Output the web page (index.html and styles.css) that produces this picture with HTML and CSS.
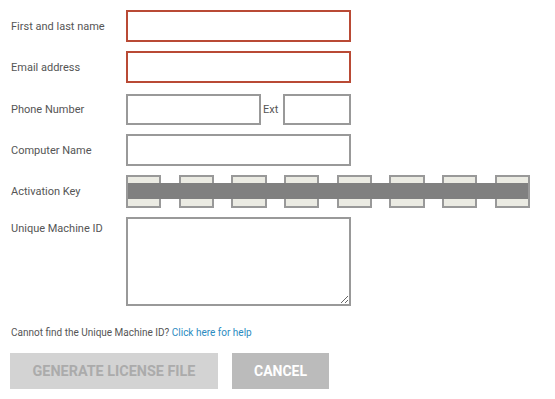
FILE: index.html
```html
<!DOCTYPE html>
<html lang="en">
<head>
    <meta charset="UTF-8">
    <meta name="viewport" content="width=device-width, initial-scale=1.0">
    <title>License Request</title>
    <link rel="stylesheet" href="styles.css">
</head>
<body>
    <form class="license-form">
        <div class="row">
            <label class="label" for="fullName">First and last name</label>
            <input class="field field-error" type="text" id="fullName">
        </div>
        <div class="row">
            <label class="label" for="email">Email address</label>
            <input class="field field-error" type="text" id="email">
        </div>
        <div class="row row-phone">
            <label class="label" for="phone">Phone Number</label>
            <input class="field phone" type="text" id="phone">
            <span class="ext-label">Ext</span>
            <input class="field ext" type="text" id="ext">
        </div>
        <div class="row">
            <label class="label" for="computer">Computer Name</label>
            <input class="field" type="text" id="computer">
        </div>
        <div class="row">
            <label class="label">Activation Key</label>
            <div class="key-group">
                <input class="key-box" type="text">
                <input class="key-box" type="text">
                <input class="key-box" type="text">
                <input class="key-box" type="text">
                <input class="key-box" type="text">
                <input class="key-box" type="text">
                <input class="key-box" type="text">
                <input class="key-box" type="text">
                <div class="key-mask"></div>
            </div>
        </div>
        <div class="row row-top">
            <label class="label label-top" for="machineId">Unique Machine ID</label>
            <textarea class="field machine-id" id="machineId"></textarea>
        </div>

        <p class="help">Cannot find the Unique Machine ID? <a href="#">Click here for help</a></p>

        <div class="actions">
            <button type="button" class="btn btn-generate" disabled>GENERATE LICENSE FILE</button>
            <button type="button" class="btn btn-cancel">CANCEL</button>
        </div>
    </form>
</body>
</html>
```

FILE: styles.css
```css
body {
    margin: 0;
    font-family: Roboto, "Liberation Sans", Arial, sans-serif;
    background: #fff;
    color: #555;
}

.license-form {
    display: flex;
    flex-direction: column;
    padding: 10px 0 0 11px;
}

.row {
    display: flex;
    align-items: center;
    height: 32px;
    margin-bottom: 9px;
}

.row-phone {
    margin-top: 1px;
}

.row-top {
    align-items: flex-start;
    height: auto;
    margin-top: 1px;
}

.label {
    width: 115px;
    font-size: 11px;
    color: #555;
}

.label-top {
    padding-top: 5px;
}

.field {
    box-sizing: border-box;
    height: 32px;
    width: 225px;
    border: 2px solid #999;
    border-radius: 0;
    padding: 4px 6px;
    font-family: inherit;
    font-size: 12px;
    background: #fff;
    outline: none;
}

.field-error {
    border-color: #b94a35;
}

.phone {
    width: 135px;
    height: 31px;
}

.ext-label {
    font-size: 11px;
    margin: 0 5px 0 2px;
}

.ext {
    width: 68px;
    height: 31px;
}

.key-group {
    position: relative;
    display: flex;
    gap: 17.5px;
    height: 33px;
}

.key-box {
    box-sizing: border-box;
    width: 35.2px;
    height: 33px;
    border: 2px solid #999;
    background: #ebebe3;
    padding: 0;
    outline: none;
}

.key-mask {
    position: absolute;
    left: 2px;
    right: 2px;
    top: 8px;
    height: 16px;
    background: #808080;
}

.machine-id {
    height: 89px;
    resize: vertical;
}

.help {
    margin: 12px 0 15px;
    font-size: 10px;
    color: #555;
}

.help a {
    color: #2b8bbf;
    text-decoration: none;
}

.actions {
    display: flex;
    gap: 14px;
    margin-left: -1px;
}

.btn {
    height: 36px;
    border: none;
    font-family: inherit;
    font-weight: bold;
    font-size: 14px;
    color: #fff;
    cursor: pointer;
}

.btn-generate {
    width: 208px;
    background: #d3d3d3;
    color: #ababab;
    font-size: 14.4px;
    cursor: default;
}

.btn-cancel {
    width: 97px;
    background: #bbbbbb;
}
```
